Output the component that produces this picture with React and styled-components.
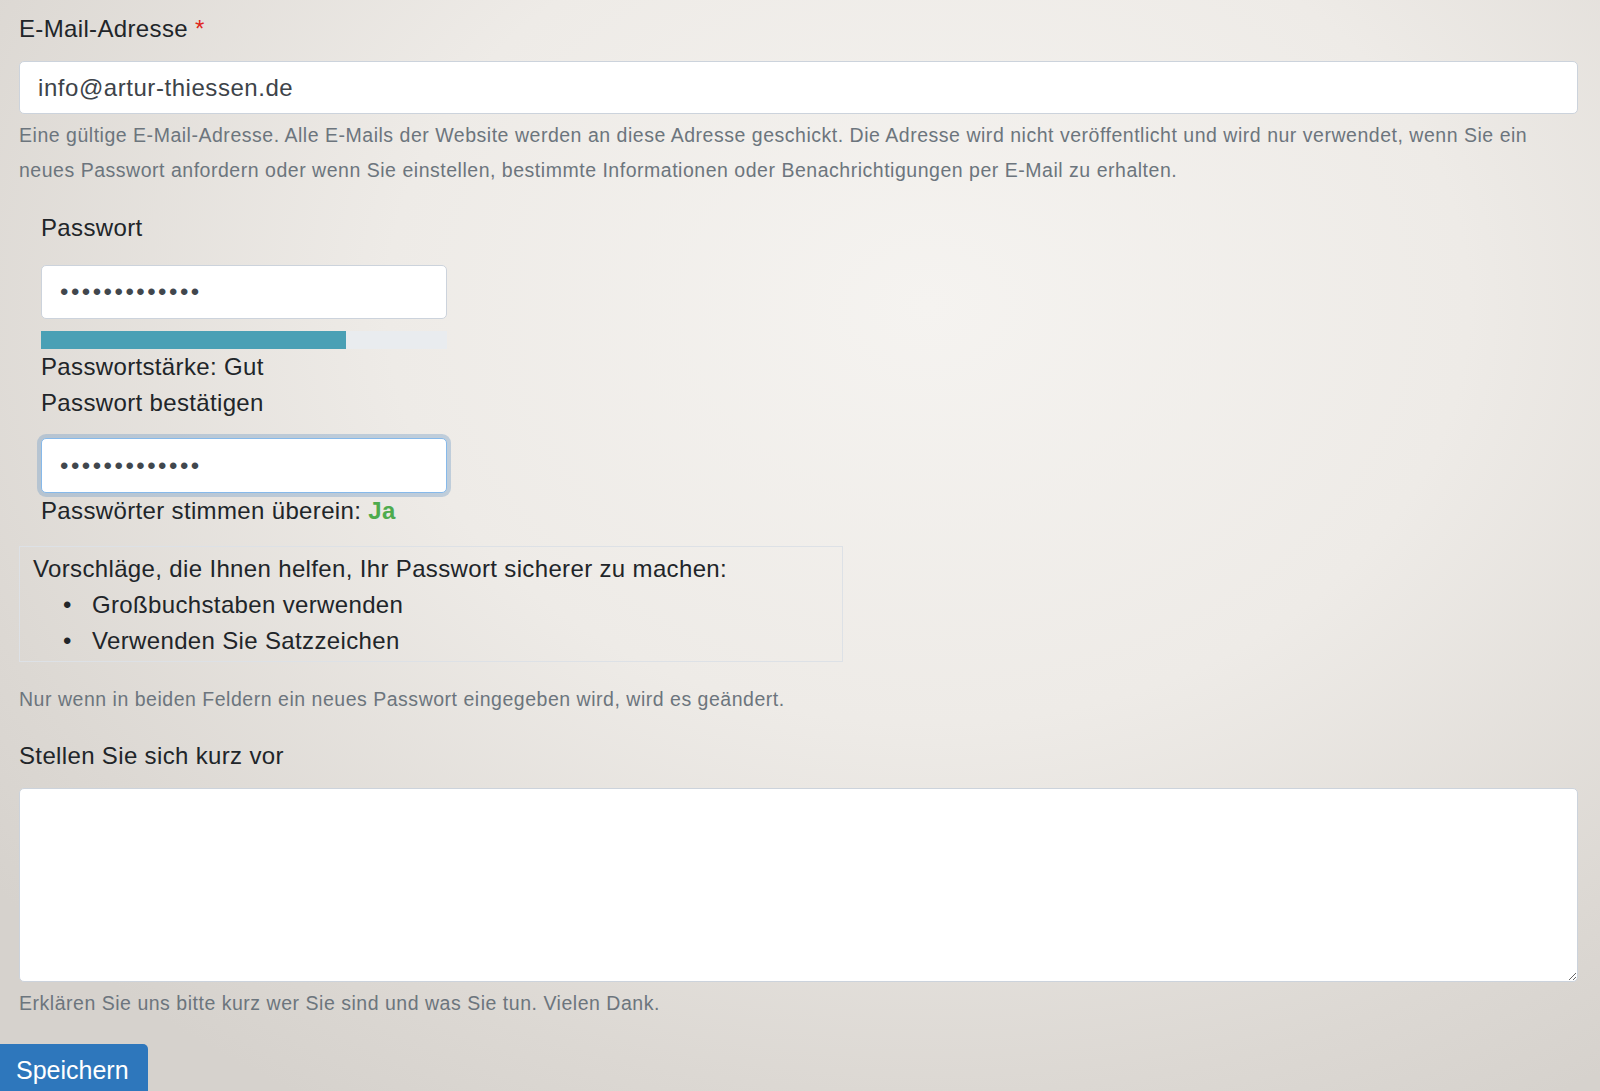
import styled, { createGlobalStyle } from 'styled-components'

const GlobalStyle = createGlobalStyle`
  html, body {
    margin: 0;
    padding: 0;
  }
  body {
    min-height: 100vh;
    font-family: "Liberation Sans", Arial, sans-serif;
    color: #212529;
    background: radial-gradient(ellipse 75% 85% at 58% 28%, #f5f3f0 0%, #eeebe7 45%, #dcd8d3 85%, #d6d2cd 100%);
    background-attachment: fixed;
  }
`

const Page = styled.main`
  min-height: 100vh;
  display: flex;
  flex-direction: column;
  padding-top: 11px;
`

const Form = styled.form`
  display: flex;
  flex-direction: column;
  padding: 0 22px 0 19px;
`

const Field = styled.div`
  display: flex;
  flex-direction: column;
  margin-top: ${(p) => p.$top || 0}px;
`

const Label = styled.label`
  font-size: 24px;
  line-height: 36px;
  letter-spacing: 0.35px;
  color: #212529;
  margin-bottom: ${(p) => p.$space ?? 14}px;
`

const Required = styled.span`
  color: #e0261c;
  margin-left: 7px;
`

const TextInput = styled.input`
  box-sizing: border-box;
  width: ${(p) => p.$width || '100%'};
  height: ${(p) => p.$height || 53}px;
  padding: 0 18px;
  font-family: inherit;
  font-size: 24px;
  letter-spacing: 0.55px;
  color: #3d4349;
  background: #fff;
  border: 1px solid ${(p) => (p.$focused ? '#86b9ea' : '#ccd3dc')};
  border-radius: 5px;
  outline: none;
  box-shadow: ${(p) => (p.$focused ? '0 0 0 4px rgba(120, 160, 200, 0.4)' : 'none')};

  &[type='password'] {
    letter-spacing: 2.5px;
    color: #41474d;
  }
`

const Help = styled.div`
  font-size: 19.5px;
  line-height: 35px;
  letter-spacing: 0.52px;
  color: #6c757d;
  margin-top: ${(p) => p.$top ?? 4}px;
`

const PasswordGroup = styled.div`
  display: flex;
  flex-direction: column;
  padding-left: 22px;
  margin-top: 22px;
`

const Strength = styled.div`
  width: 406px;
  height: 18px;
  margin-top: 12px;
  background: #e9ecef;
`

const StrengthFill = styled.div`
  height: 100%;
  background: #4aa0b5;
`

const Status = styled.div`
  font-size: 24px;
  line-height: 36px;
  letter-spacing: 0.35px;
  color: #212529;
`

const Yes = styled.span`
  color: #4eab4e;
  font-weight: 700;
`

const Suggestions = styled.div`
  width: 824px;
  box-sizing: border-box;
  margin-top: 17px;
  padding: 4px 13px 2px;
  border: 1px solid #dde1e6;
  font-size: 24px;
  line-height: 36px;
  letter-spacing: 0.35px;
  color: #212529;
`

const SuggestionList = styled.ul`
  margin: 0;
  padding-left: 30px;
  list-style: none;
`

const Suggestion = styled.li`
  display: flex;

  &::before {
    content: '•';
    width: 29px;
    flex: none;
  }
`

const TextArea = styled.textarea`
  box-sizing: border-box;
  width: 100%;
  height: 194px;
  padding: 12px 18px;
  font-family: inherit;
  font-size: 24px;
  background: #fff;
  border: 1px solid #ccd3dc;
  border-radius: 5px;
  outline: none;
  resize: vertical;
  display: block;
`

const Actions = styled.div`
  margin-top: 23px;
`

const SaveButton = styled.button`
  box-sizing: border-box;
  height: 62px;
  padding: 12px 19px 0 16px;
  display: flex;
  align-items: flex-start;
  font-family: inherit;
  font-size: 25px;
  color: #fff;
  background: #2e77bc;
  border: none;
  border-radius: 0 5px 0 0;
  cursor: pointer;
`

export default function App() {
  const strength = 75

  return (
    <Page>
      <GlobalStyle />
      <Form onSubmit={(e) => e.preventDefault()}>
        <Field>
          <Label>
            E-Mail-Adresse<Required>*</Required>
          </Label>
          <TextInput type="email" defaultValue="info@artur-thiessen.de" />
          <Help>
            Eine gültige E-Mail-Adresse. Alle E-Mails der Website werden an diese Adresse geschickt. Die Adresse wird
            nicht veröffentlicht und wird nur verwendet, wenn Sie ein neues Passwort anfordern oder wenn Sie einstellen,
            bestimmte Informationen oder Benachrichtigungen per E-Mail zu erhalten.
          </Help>
        </Field>

        <PasswordGroup>
          <Label $space={19}>Passwort</Label>
          <TextInput type="password" $width="406px" $height={54} defaultValue="abcdefghijklm" readOnly />
          <Strength>
            <StrengthFill style={{ width: `${strength}%` }} />
          </Strength>
          <Status>Passwortstärke: Gut</Status>
          <Label $space={17}>Passwort bestätigen</Label>
          <TextInput type="password" $width="406px" $height={55} $focused defaultValue="abcdefghijklm" readOnly />
          <Status>
            Passwörter stimmen überein: <Yes>Ja</Yes>
          </Status>
        </PasswordGroup>

        <Suggestions>
          Vorschläge, die Ihnen helfen, Ihr Passwort sicherer zu machen:
          <SuggestionList>
            <Suggestion>Großbuchstaben verwenden</Suggestion>
            <Suggestion>Verwenden Sie Satzzeichen</Suggestion>
          </SuggestionList>
        </Suggestions>
        <Help $top={20}>Nur wenn in beiden Feldern ein neues Passwort eingegeben wird, wird es geändert.</Help>

        <Field $top={21}>
          <Label>Stellen Sie sich kurz vor</Label>
          <TextArea />
          <Help>Erklären Sie uns bitte kurz wer Sie sind und was Sie tun. Vielen Dank.</Help>
        </Field>
      </Form>
      <Actions>
        <SaveButton type="submit">Speichern</SaveButton>
      </Actions>
    </Page>
  )
}
